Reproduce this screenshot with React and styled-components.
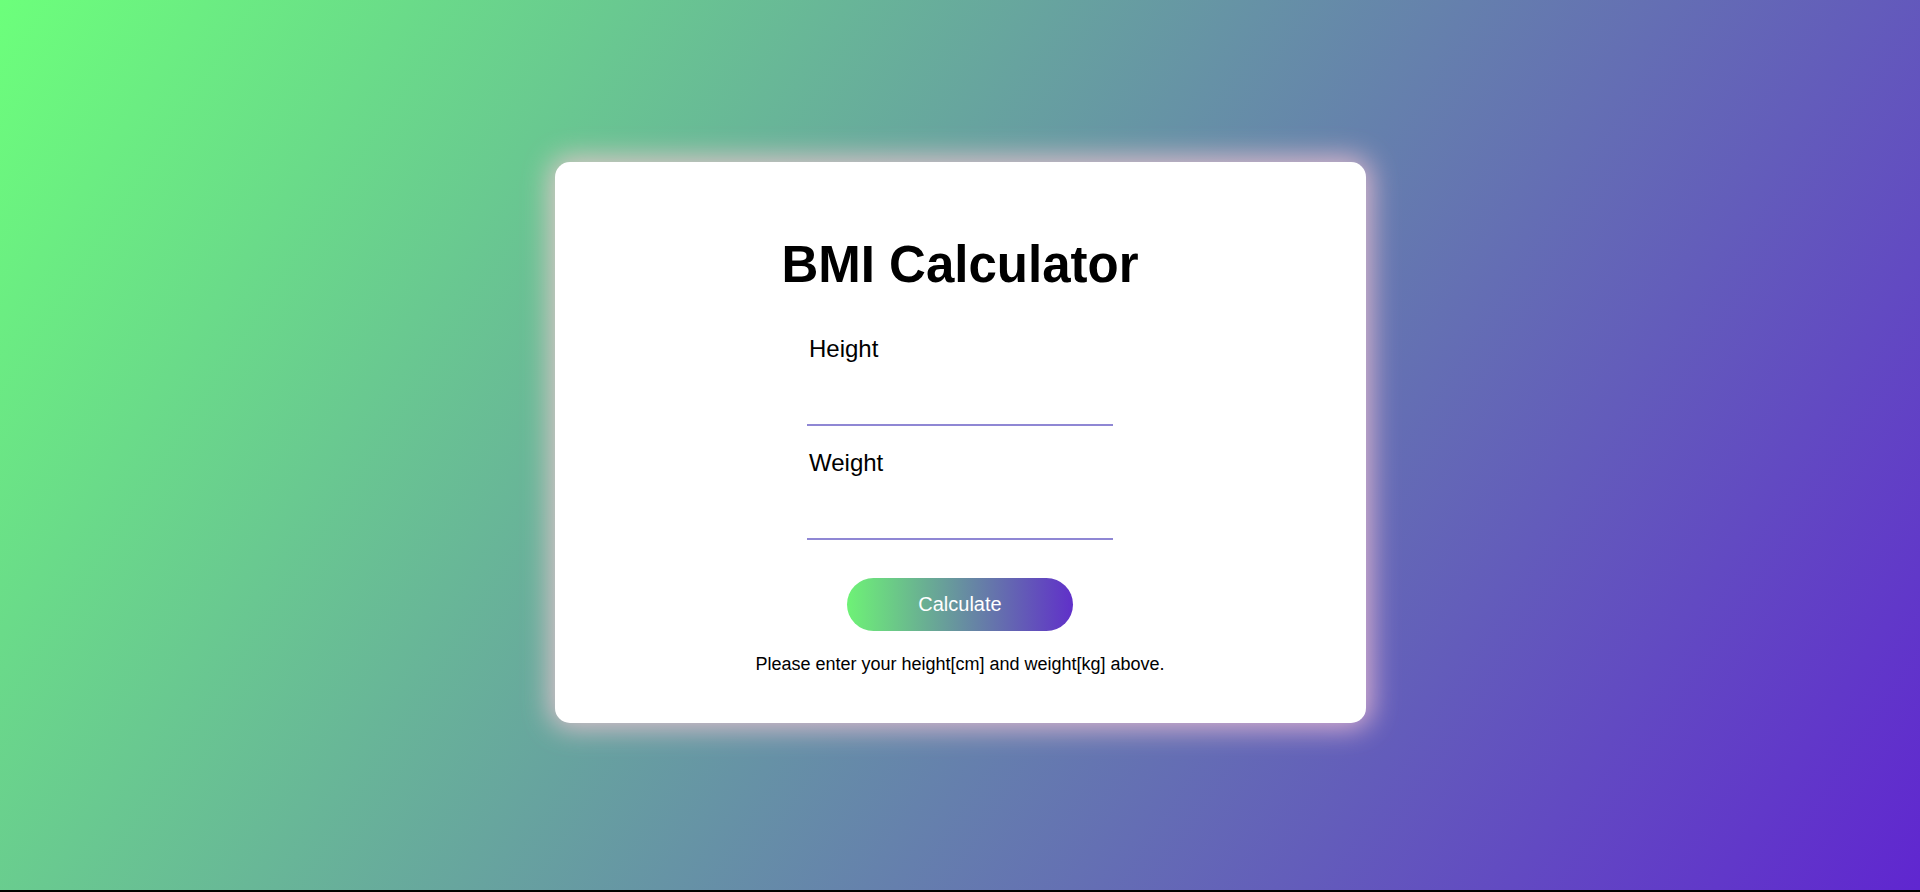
import React from 'react';
import styled, { createGlobalStyle } from 'styled-components';

const GlobalStyle = createGlobalStyle`
  html {
    background: #000;
  }
  body {
    margin: 0;
    font-family: "Liberation Sans", Arial, sans-serif;
  }
`;

const Page = styled.div`
  height: 890px;
  box-sizing: border-box;
  padding-top: 162px;
  background: linear-gradient(123deg, #6cff7b, #6026d0);
  display: flex;
  justify-content: center;
  align-items: flex-start;
`;

const Card = styled.div`
  width: 811px;
  height: 561px;
  box-sizing: border-box;
  padding: 74px 0 48px;
  background: #fff;
  border-radius: 15px;
  box-shadow: 0 0 28px 5px rgba(255, 200, 215, 0.8);
  display: flex;
  flex-direction: column;
  align-items: center;
`;

const Title = styled.h1`
  margin: 0 0 41px;
  font-size: 51px;
  line-height: 58px;
  font-weight: 700;
  color: #000;
`;

const Form = styled.div`
  width: 306px;
  display: flex;
  flex-direction: column;
  gap: 23px;
`;

const Field = styled.label`
  display: flex;
  flex-direction: column;
`;

const Label = styled.span`
  padding-left: 2px;
  font-size: 24px;
  line-height: 28px;
  color: #000;
`;

const Input = styled.input`
  height: 63px;
  box-sizing: border-box;
  border: none;
  border-bottom: 2px solid #8f87d4;
  outline: none;
  background: transparent;
  font-family: inherit;
  font-size: 20px;
  padding: 0 2px;
`;

const Button = styled.button`
  margin-top: 38px;
  width: 226px;
  height: 53px;
  border: none;
  border-radius: 27px;
  background: linear-gradient(to right, #6ef276, #6030c9);
  color: #fff;
  font-family: inherit;
  font-size: 20px;
  cursor: pointer;
`;

const Message = styled.p`
  margin: 23px 0 0;
  font-size: 18px;
  line-height: 21px;
  color: #000;
`;

export default function App() {
  return (
    <>
      <GlobalStyle />
      <Page>
        <Card>
          <Title>BMI Calculator</Title>
          <Form>
            <Field>
              <Label>Height</Label>
              <Input type="text" />
            </Field>
            <Field>
              <Label>Weight</Label>
              <Input type="text" />
            </Field>
          </Form>
          <Button>Calculate</Button>
          <Message>Please enter your height[cm] and weight[kg] above.</Message>
        </Card>
      </Page>
    </>
  );
}
